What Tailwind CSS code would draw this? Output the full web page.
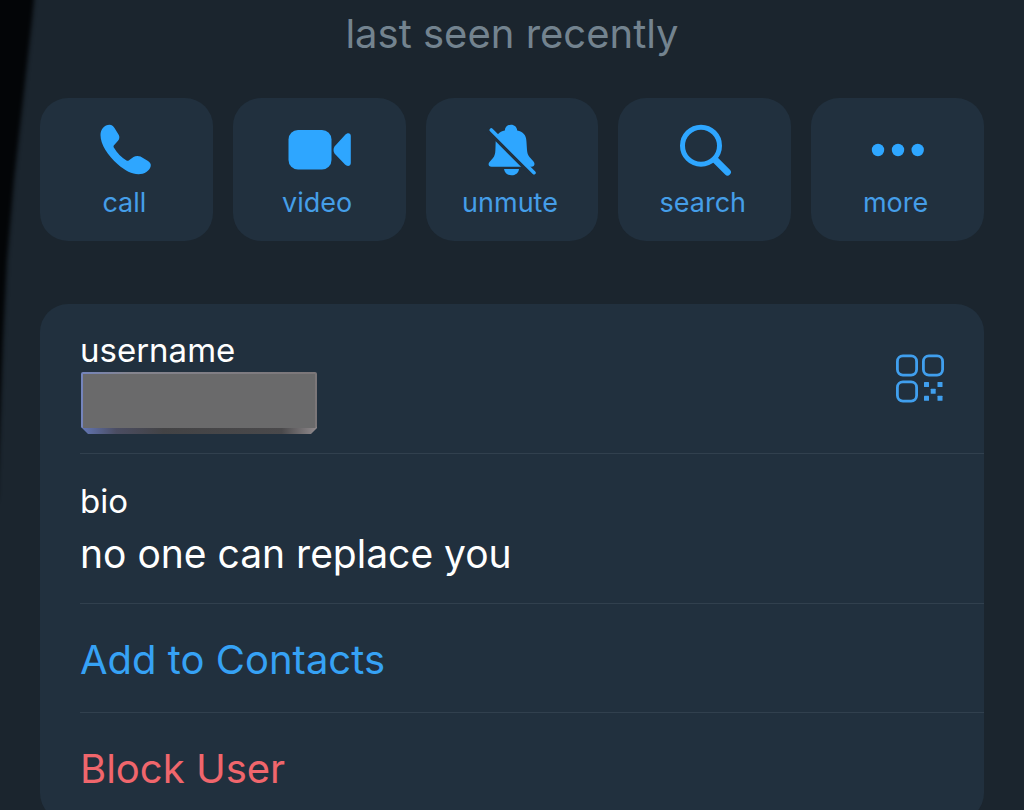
<!DOCTYPE html>
<html lang="en">
<head>
    <meta charset="UTF-8">
    <meta name="viewport" content="width=device-width, initial-scale=1.0">
    <title>Profile</title>
    <script src="https://cdn.jsdelivr.net/npm/@tailwindcss/browser@4"></script>
</head>
<body class="bg-[#1b252e] font-['Inter',sans-serif]">
    <main class="relative min-h-screen px-10 pt-2.5 overflow-hidden">
        <!-- Dark edge on the left -->
        <svg class="absolute left-0 top-0 w-12 h-[520px]" viewBox="0 0 48 520" aria-hidden="true">
            <defs>
                <filter id="soft" x="-50%" y="-10%" width="200%" height="120%" color-interpolation-filters="sRGB">
                    <feGaussianBlur stdDeviation="2" />
                </filter>
            </defs>
            <path d="M-20 -20H36L32 20L23 100L14 180L7 260L3 340L0 420L-3 500H-20Z" fill="#030507" filter="url(#soft)" />
        </svg>

        <p class="relative text-[40px] leading-[48px] text-center text-[#73838f]">last seen recently</p>

        <!-- Actions -->
        <div class="relative mt-10 grid grid-cols-5 gap-5 text-[27px] leading-8 text-[#459ee8]">
            <button type="button" class="flex flex-col items-center gap-[11px] rounded-[28px] bg-[#21303e] pt-[22px] pb-[22px] pr-1">
                <svg class="w-16 h-14 overflow-visible" viewBox="0 0 64 56" fill="#2ea6ff" aria-hidden="true">
                    <path d="M8.500 15C8.500 9 12.500 4.700 17.500 4.700C20 4.700 21.300 6 22.500 8L26.800 15C27.800 17 27.500 19 26 20.800L21.800 25.500C21.300 26.200 21.500 27 22 27.800C25 33 29.500 37.500 34.500 40.500C35.300 41 36.200 41 37 40.300L41.500 37C43.500 35.700 46.500 35.600 48.500 36.600L56 41C58.300 42.400 59.200 44.300 58.700 46.300C57.500 51 52.500 54.300 46.500 54.300C40 54.300 33 50.500 26 44.500C15.500 35.500 8.500 24 8.500 15Z" />
                </svg>
                <span>call</span>
            </button>
            <button type="button" class="flex flex-col items-center gap-[11px] rounded-[28px] bg-[#21303e] pt-[22px] pb-[22px] pr-1">
                <svg class="w-16 h-14 overflow-visible" viewBox="0 0 64 56" fill="#2ea6ff" aria-hidden="true">
                    <rect x="3.500" y="10" width="43" height="39.500" rx="9.500" />
                    <path d="M49.500 26.500L60 15C62 12.800 65.800 12.500 65.800 16V43C65.800 46.500 62 46.800 60 44.600L49.500 33.500C48.200 31.500 48.200 28.500 49.500 26.500Z" />
                </svg>
                <span>video</span>
            </button>
            <button type="button" class="flex flex-col items-center gap-[11px] rounded-[28px] bg-[#21303e] pt-[22px] pb-[22px] pr-1">
                <svg class="w-16 h-14 overflow-visible" viewBox="0 0 64 56" fill="#2ea6ff" aria-hidden="true">
                    <path d="M26.800 10.500C27 7 29.500 4.700 33 4.700C36.500 4.700 39 7 39.200 10.500C45 11.500 48.200 15 48.400 21L49 30C49.200 33 50 35 51.500 37L55.500 41.500C57.500 44 56.300 46.700 53.500 46.700H13.500C10.500 46.700 9.800 44 11.500 42L15 38C16.600 36 17.300 33.500 17.400 30L17.700 21C18 15.500 21 11.500 26.800 10.500Z" />
                    <path d="M26 49H41C40.500 53 37.500 55.300 33.500 55.300C29.500 55.300 26.500 53 26 49Z" />
                    <path d="M8.500 9.500L54 55.300" stroke="#21303e" stroke-width="3.600" />
                    <path d="M13.300 9.900L56 52.700" stroke="#2ea6ff" stroke-width="3.600" stroke-linecap="round" />
                </svg>
                <span>unmute</span>
            </button>
            <button type="button" class="flex flex-col items-center gap-[11px] rounded-[28px] bg-[#21303e] pt-[22px] pb-[22px] pr-1">
                <svg class="w-16 h-14 overflow-visible" viewBox="0 0 64 56" fill="none" stroke="#2ea6ff" stroke-linecap="round" aria-hidden="true">
                    <circle cx="30" cy="25.700" r="18.500" stroke-width="5" />
                    <path d="M44.500 40.200L56.500 52.200" stroke-width="6.800" />
                </svg>
                <span>search</span>
            </button>
            <button type="button" class="flex flex-col items-center gap-[11px] rounded-[28px] bg-[#21303e] pt-[22px] pb-[22px] pr-1">
                <svg class="w-16 h-14 overflow-visible" viewBox="0 0 64 56" fill="#2ea6ff" aria-hidden="true">
                    <circle cx="14" cy="30" r="6.200" />
                    <circle cx="34" cy="30" r="6.200" />
                    <circle cx="53.700" cy="30" r="6.200" />
                </svg>
                <span>more</span>
            </button>
        </div>

        <!-- Info card -->
        <section class="relative mt-[63px] rounded-[28px] bg-[#21303e] pl-10 text-[40px] leading-[48px] text-white">
            <div class="flex items-start justify-between border-b border-[#31404e] pt-[26px] pb-[19px] pr-10">
                <div>
                    <h2 class="text-[33px] leading-10">username</h2>
                    <svg class="mt-0.5 w-[238px] h-[62px]" viewBox="0 0 238 62" role="img" aria-label="hidden username">
                        <defs>
                            <linearGradient id="bevel" x1="0" x2="1" y1="0" y2="0">
                                <stop offset="0" stop-color="#6478b8" />
                                <stop offset="0.150" stop-color="#4b4d62" />
                                <stop offset="0.350" stop-color="#434345" />
                                <stop offset="0.850" stop-color="#4a494b" />
                                <stop offset="1" stop-color="#918b8e" />
                            </linearGradient>
                            <linearGradient id="rim" x1="0" x2="1" y1="0" y2="0">
                                <stop offset="0" stop-color="#7484bd" />
                                <stop offset="0.200" stop-color="#85858f" />
                                <stop offset="1" stop-color="#7b7678" />
                            </linearGradient>
                        </defs>
                        <path d="M1 50H237V56L231 62H8L1 55Z" fill="url(#bevel)" />
                        <rect x="1" width="236" height="56" rx="2" fill="url(#rim)" />
                        <rect x="3" y="2" width="232" height="54" fill="#6a6a6b" />
                    </svg>
                </div>
                <button type="button" class="mt-6" aria-label="QR code">
                    <svg class="w-[50px] h-[50px]" viewBox="0 0 50 50" fill="none" stroke="#409fee" stroke-width="2.800" aria-hidden="true">
                        <rect x="3.400" y="1.900" width="19.200" height="19.200" rx="5.500" />
                        <rect x="29.400" y="1.900" width="19.200" height="19.200" rx="5.500" />
                        <rect x="3.400" y="27.900" width="19.200" height="19.200" rx="5.500" />
                        <g fill="#409fee" stroke="none">
                            <rect x="30" y="28" width="5" height="5" rx="0.500" />
                            <rect x="43.500" y="28" width="5" height="5" rx="0.500" />
                            <rect x="36.700" y="34.800" width="5" height="5" rx="0.500" />
                            <rect x="30" y="41.800" width="5" height="5" rx="0.500" />
                            <rect x="43.500" y="41.800" width="5" height="5" rx="0.500" />
                        </g>
                    </svg>
                </button>
            </div>
            <div class="border-b border-[#31404e] pt-[27px] pb-[25px]">
                <h2 class="text-[33px] leading-10">bio</h2>
                <p class="mt-[9px] text-[39px]">no one can replace you</p>
            </div>
            <button type="button" class="block w-full border-b border-[#31404e] pt-8 pb-7 text-left text-[#36a2f5]">Add to Contacts</button>
            <button type="button" class="block w-full pt-8 pb-7 text-left text-[#f0666c]">Block User</button>
        </section>
    </main>
</body>
</html>
